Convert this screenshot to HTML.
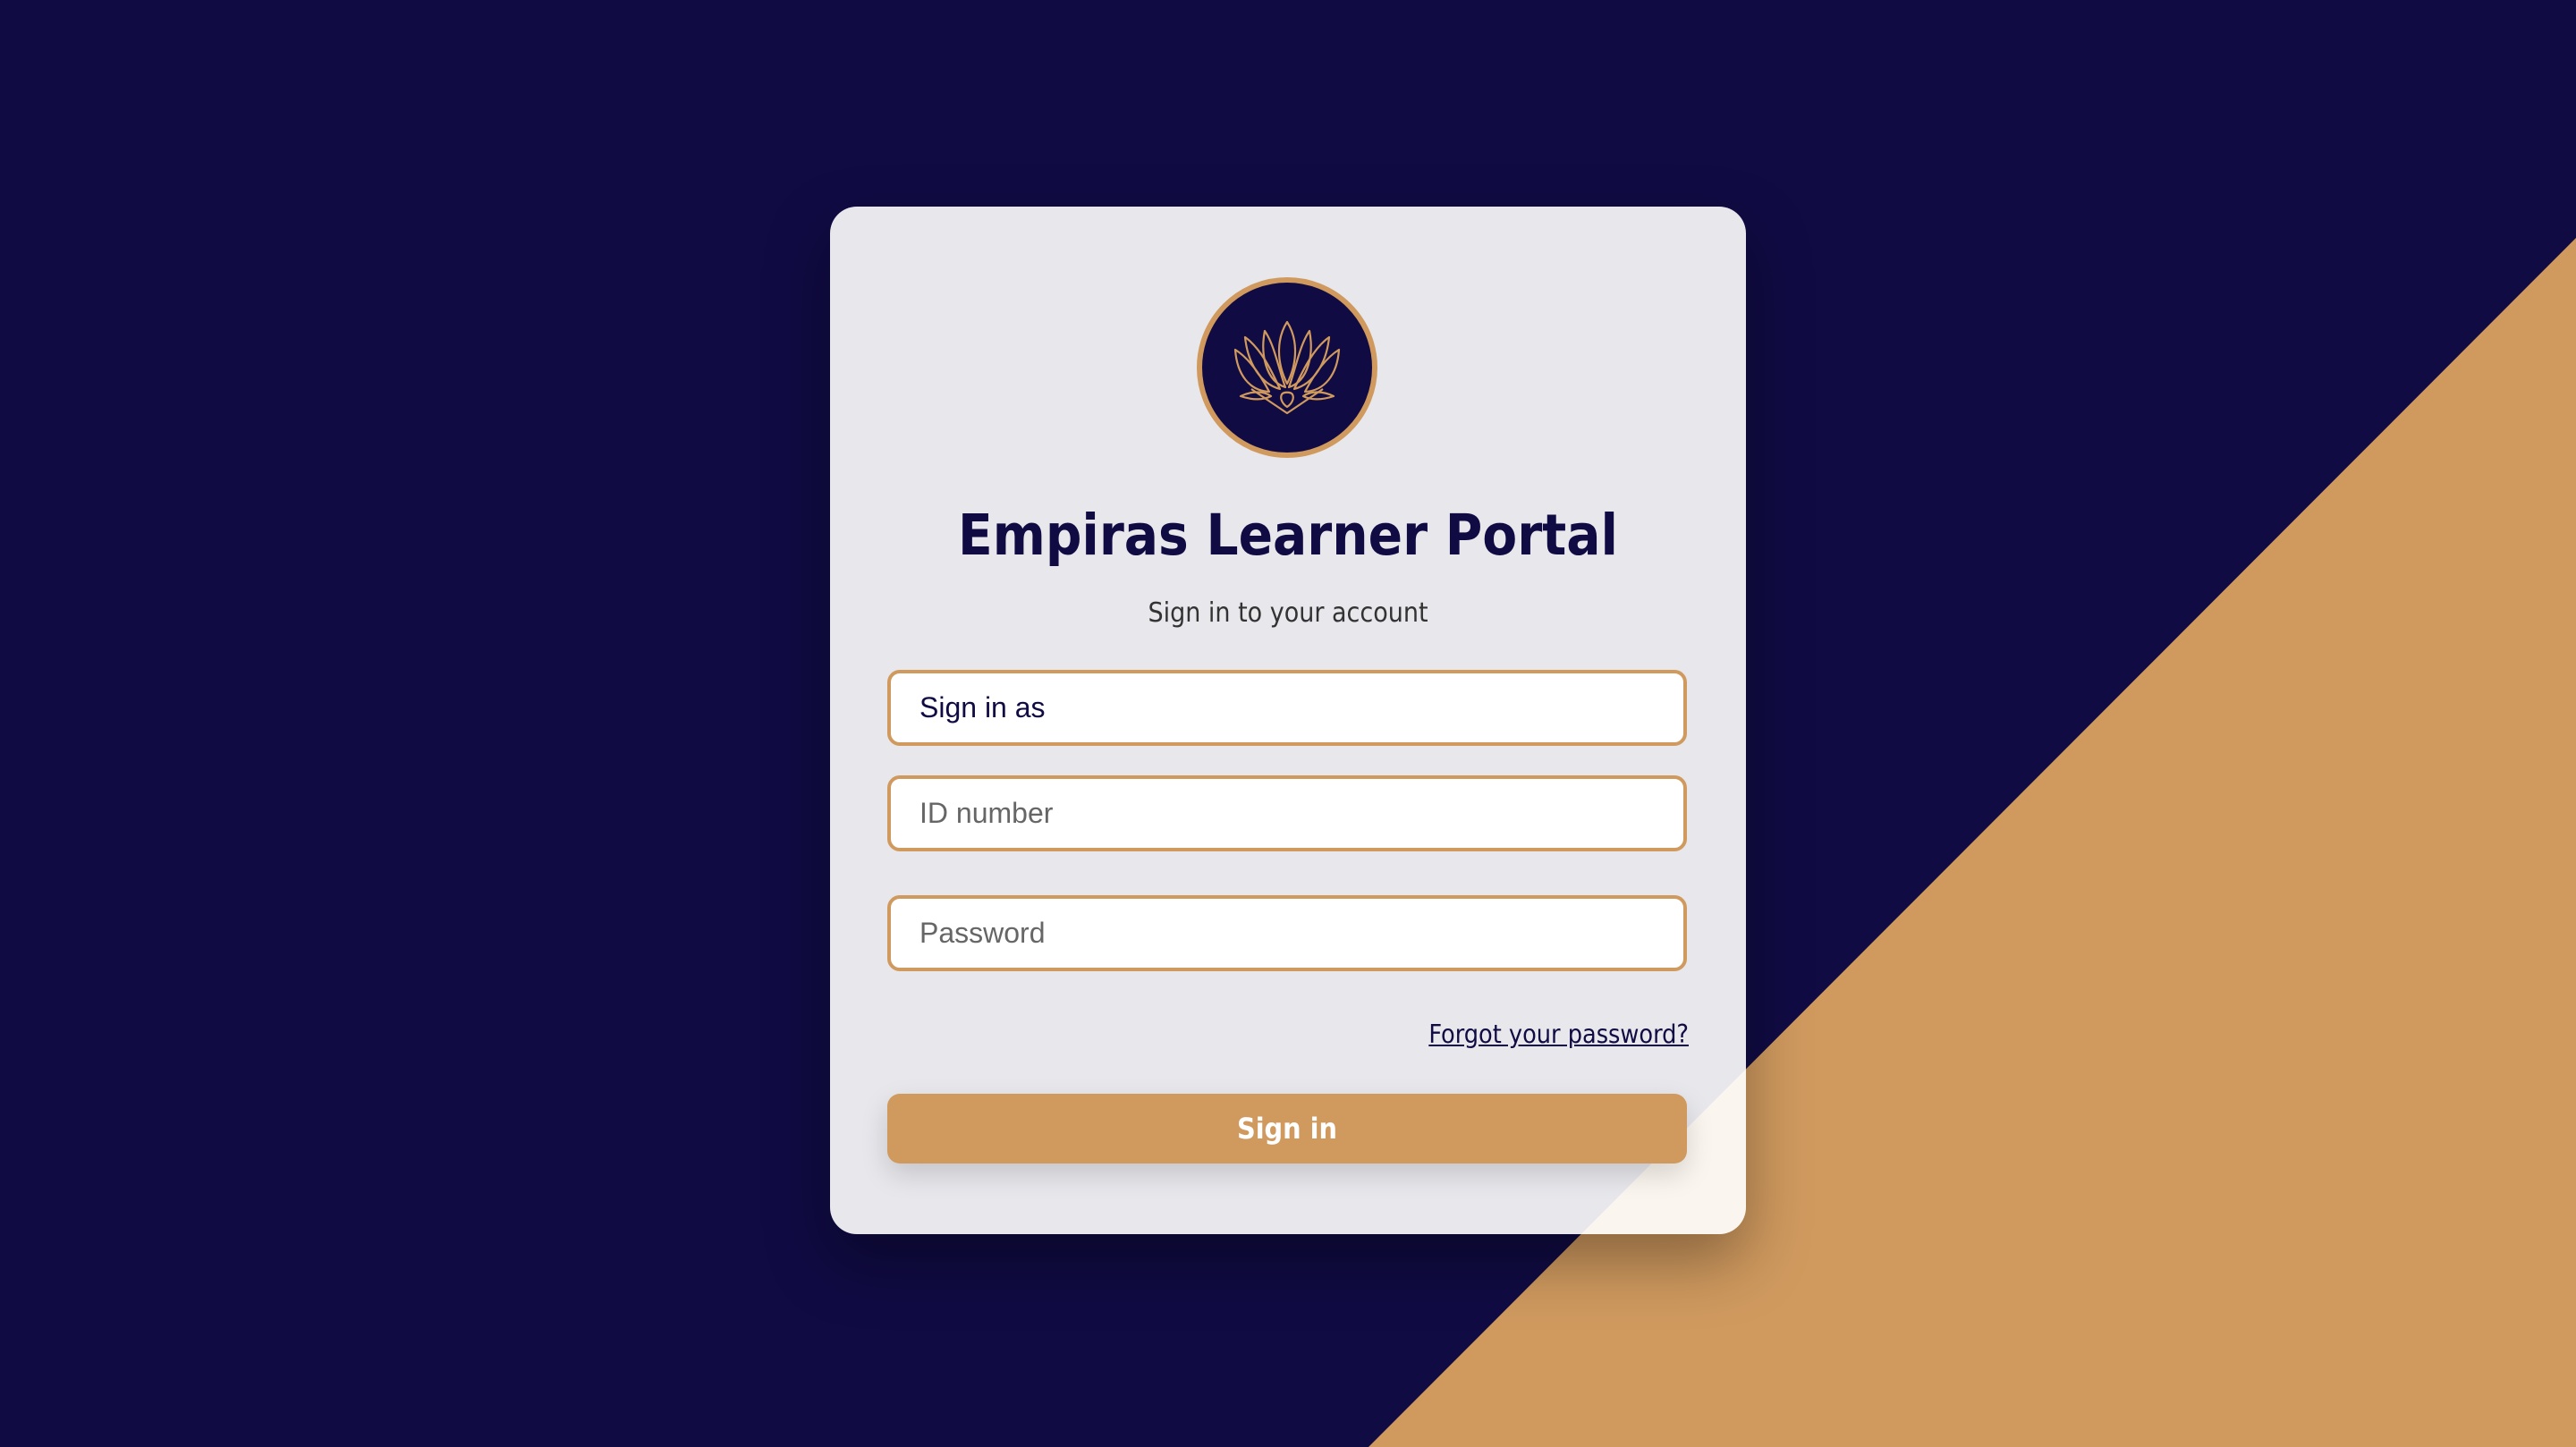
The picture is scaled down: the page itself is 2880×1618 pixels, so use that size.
<!DOCTYPE html>
<html><head><meta charset="utf-8"><style>
html,body{margin:0;padding:0}
body{width:2880px;height:1618px;background:#100b43;position:relative;overflow:hidden;font-family:"DejaVu Sans Condensed","DejaVu Sans",sans-serif}
.tri{position:absolute;left:0;top:0;width:2880px;height:1618px}
.card{position:absolute;left:928px;top:231px;width:1024px;height:1149px;border-radius:30px;background:rgba(255,255,255,0.9);box-shadow:0 30px 70px rgba(0,0,0,0.35)}
.logo{position:absolute;left:410px;top:79px;width:202px;height:202px}
h1{position:absolute;left:0;right:0;margin:0;text-align:center;font-family:"DejaVu Sans Condensed","DejaVu Sans",sans-serif;font-weight:bold;font-size:63px;color:#100b43;line-height:1;top:336px}
.sub{position:absolute;left:0;right:0;top:440px;text-align:center;font-size:30px;color:#333;line-height:1}
.inp{position:absolute;left:64px;width:886px;height:77px;border:4px solid #d09a5f;border-radius:14px;background:#fff;box-sizing:content-box;font-family:"Liberation Sans",sans-serif;font-size:32px;line-height:77px;padding:0;text-indent:32px;color:#666}
.forgot{position:absolute;right:64px;top:912px;font-size:28.5px;color:#100b43;text-decoration:underline;line-height:1}
.btn{position:absolute;left:64px;top:992px;width:894px;height:78px;border-radius:14px;background:#d09a5f;color:#fff;font-weight:bold;font-size:32px;text-align:center;line-height:78px;box-shadow:0 12px 30px rgba(0,0,0,0.15)}
</style></head><body>
<svg class="tri" viewBox="0 0 2880 1618"><polygon points="2880,266 2880,1618 1530,1618" fill="#d09a5f"/></svg>
<div class="card">
<svg class="logo" viewBox="0 0 202 202">
<circle cx="101" cy="101" r="98" fill="#100b43" stroke="#d09a5f" stroke-width="6"/>
<g fill="none" stroke="#d09a5f" stroke-width="2.2" stroke-linejoin="round" transform="translate(-9,-9)">
<path d="M110,59 C99,76 97,102 110,128 C123,102 121,76 110,59Z"/>
<path d="M85,69 C80,95 86,125 108,132 C100,110 96,85 85,69Z"/>
<path d="M135,69 C140,95 134,125 112,132 C120,110 124,85 135,69Z"/>
<path d="M63,76 C66,105 80,128 102,134 C92,112 80,88 63,76Z"/>
<path d="M157,76 C154,105 140,128 118,134 C128,112 140,88 157,76Z"/>
<path d="M52,90 C54,118 68,136 90,137 C80,118 68,100 52,90Z"/>
<path d="M168,90 C166,118 152,136 130,137 C140,118 152,100 168,90Z"/>
<path d="M58,142 C70,136 84,136 92,142 C82,147 70,146 58,142Z"/>
<path d="M162,142 C150,136 136,136 128,142 C138,147 150,146 162,142Z"/>
<path d="M70,134 L110,161 L150,134"/>
<path d="M110,154 C104,150 102,144 104,140 C106,137 114,137 116,140 C118,144 116,150 110,154Z"/>
</g></svg>
<h1>Empiras Learner Portal</h1>
<div class="sub">Sign in to your account</div>
<div class="inp" style="top:518px;color:#100b43">Sign in as</div>
<div class="inp" style="top:636px">ID number</div>
<div class="inp" style="top:770px">Password</div>
<div class="forgot">Forgot your password?</div>
<div class="btn">Sign in</div>
</div>
</body></html>
